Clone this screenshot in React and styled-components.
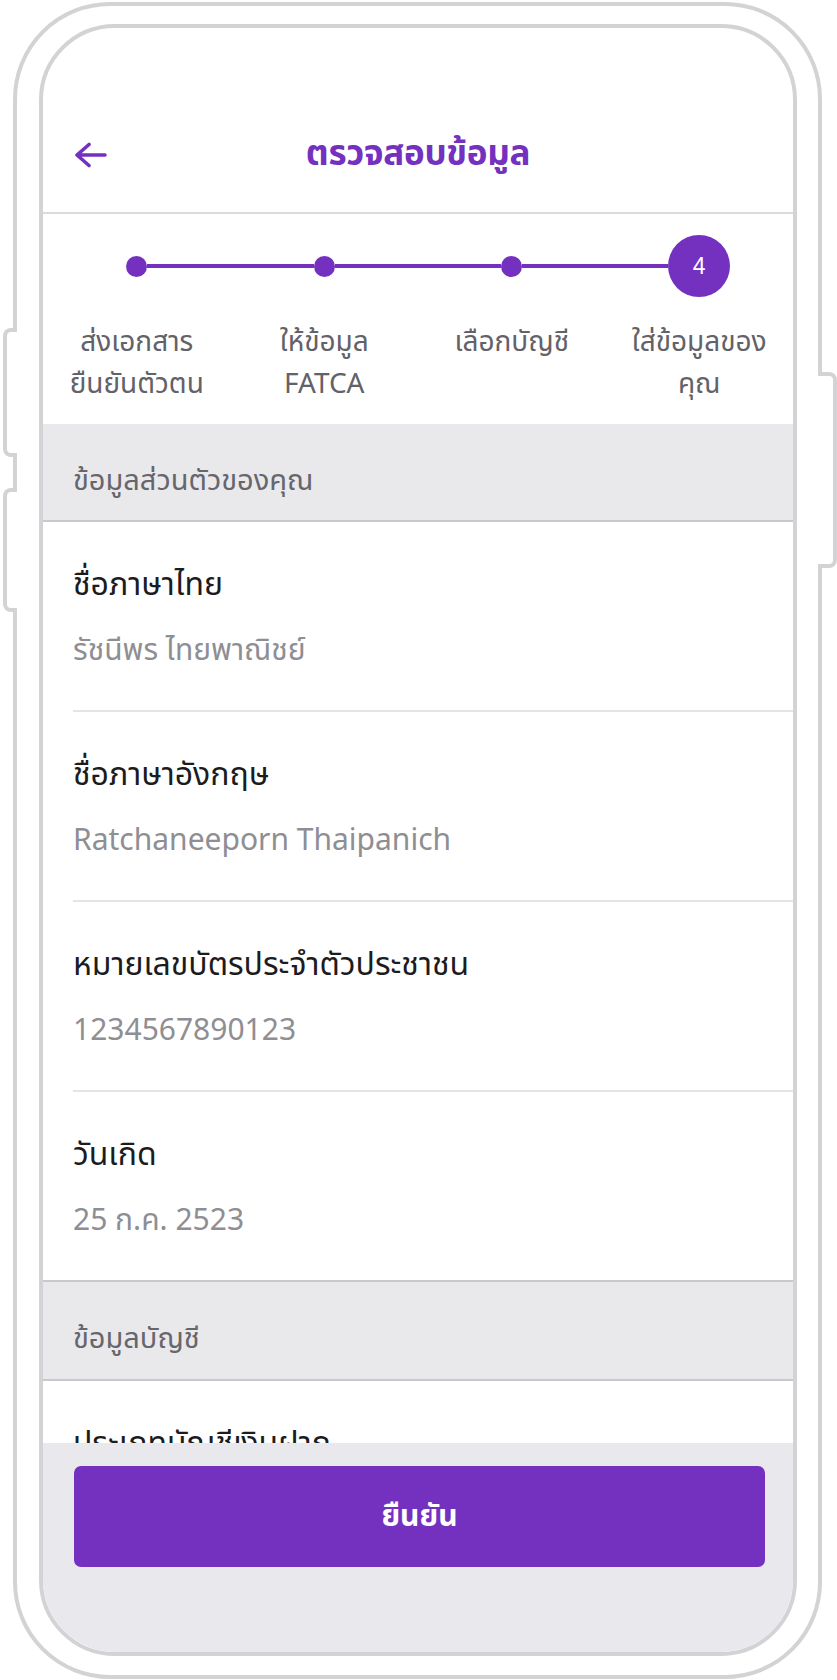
import React from "react";
import styled, { createGlobalStyle } from "styled-components";

const GlobalStyle = createGlobalStyle`
  html, body {
    margin: 0;
    padding: 0;
    background: #ffffff;
  }
  body {
    font-family: "Noto Sans Thai", "Noto Sans", "Liberation Sans", sans-serif;
    -webkit-font-smoothing: antialiased;
  }
  * {
    box-sizing: border-box;
  }
`;

const PURPLE = "#7431bf";
const FRAME = "#d3d3d6";

const Page = styled.div`
  width: 837px;
  height: 1680px;
  padding: 2px 15px 1px 13px;
  overflow: hidden;
`;

const Device = styled.div`
  position: relative;
  height: 100%;
  border: 4px solid ${FRAME};
  border-radius: 97px;
  padding: 18px 21px 19px 22px;
  display: flex;
  flex-direction: column;
  background: #fff;
`;

// hardware keys sit over the frame edge
const SideKey = styled.span`
  position: absolute;
  top: ${(p) => p.$top}px;
  height: ${(p) => p.$height}px;
  width: ${(p) => (p.$right ? 19 : 14)}px;
  ${(p) => (p.$right ? "right: -19px;" : "left: -14px;")}
  background: #fff;
  border: 4px solid ${FRAME};
  ${(p) => (p.$right ? "border-left: none;" : "border-right: none;")}
  border-radius: ${(p) => (p.$right ? "0 8px 8px 0" : "8px 0 0 8px")};
`;

const Screen = styled.div`
  flex: 1;
  display: flex;
  flex-direction: column;
  border: 4px solid ${FRAME};
  border-radius: 76px;
  overflow: hidden;
  background: #fff;
`;

const Header = styled.header`
  display: grid;
  grid-template-columns: 1fr auto 1fr;
  align-items: center;
  height: 186px;
  padding: 99px 31px 29px;
  border-bottom: 2px solid #dadadd;
  flex-shrink: 0;
`;

const BackButton = styled.button`
  justify-self: start;
  display: flex;
  align-items: center;
  padding: 0;
  border: none;
  background: none;
  color: ${PURPLE};
  cursor: pointer;
`;

const Title = styled.h1`
  margin: 0;
  font-size: 35px;
  line-height: 56px;
  font-weight: 700;
  color: ${PURPLE};
  letter-spacing: -0.3px;
`;

const Stepper = styled.div`
  display: grid;
  grid-template-columns: repeat(4, 1fr);
  padding: 21px 0 18px;
  flex-shrink: 0;
`;

const Step = styled.div`
  display: flex;
  flex-direction: column;
  align-items: stretch;
`;

const Track = styled.div`
  display: flex;
  align-items: center;
  height: 62px;
`;

const Rail = styled.span`
  flex: 1;
  height: 4px;
  background: ${(p) => (p.$hidden ? "transparent" : PURPLE)};
`;

const Marker = styled.span`
  display: flex;
  align-items: center;
  justify-content: center;
  width: ${(p) => (p.$current ? 62 : 21)}px;
  height: ${(p) => (p.$current ? 62 : 21)}px;
  border-radius: 50%;
  background: ${PURPLE};
  color: #fff;
  font-family: "Liberation Sans", sans-serif;
  font-size: 23px;
`;

const StepLabel = styled.span`
  margin-top: 25px;
  text-align: center;
  font-size: 28px;
  line-height: 42px;
  color: #626268;
`;

const Scroll = styled.main`
  flex: 1;
  overflow: hidden;
`;

const SectionHeader = styled.div`
  height: ${(p) => (p.$divided ? 101 : 98)}px;
  padding: 37px 30px 0;
  background: #e9e9ec;
  border-top: ${(p) => (p.$divided ? "2px solid #c9c9cd" : "none")};
  border-bottom: 2px solid #c9c9cd;
  font-size: 29px;
  line-height: 40px;
  color: #66666c;
`;

const List = styled.div`
  padding-left: 30px;
`;

const Row = styled.div`
  height: 190px;
  padding-top: 41px;
  border-bottom: 2px solid #e4e4e7;

  &:last-child {
    height: 188px;
    border-bottom: none;
  }
`;

const Label = styled.div`
  font-size: 32px;
  line-height: 44px;
  color: #1c1c1e;
`;

const Value = styled.div`
  margin-top: 22px;
  font-size: 30px;
  line-height: 44px;
  color: #8e8e93;
`;

const Footer = styled.footer`
  flex-shrink: 0;
  height: 209px;
  padding: 23px 28px 0 31px;
  background: #e9e8ed;
`;

const ConfirmButton = styled.button`
  width: 100%;
  height: 101px;
  border: none;
  border-radius: 7px;
  background: ${PURPLE};
  color: #fff;
  font-family: inherit;
  font-size: 30px;
  font-weight: 700;
  cursor: pointer;
`;

const steps = [
  ["ส่งเอกสาร", "ยืนยันตัวตน"],
  ["ให้ข้อมูล", "FATCA"],
  ["เลือกบัญชี"],
  ["ใส่ข้อมูลของ", "คุณ"],
];

const personal = [
  { label: "ชื่อภาษาไทย", value: "รัชนีพร ไทยพาณิชย์" },
  { label: "ชื่อภาษาอังกฤษ", value: "Ratchaneeporn Thaipanich" },
  { label: "หมายเลขบัตรประจำตัวประชาชน", value: "1234567890123" },
  { label: "วันเกิด", value: "25 ก.ค. 2523" },
];

const account = [
  { label: "ประเภทบัญชีเงินฝาก", value: "ออมทรัพย์" },
];

function BackArrow() {
  return (
    <svg width="34" height="26" viewBox="0 0 34 26" fill="none">
      <path
        d="M3 13H31M15 2.5L3 13L15 23.5"
        stroke="currentColor"
        strokeWidth="3.6"
        strokeLinecap="round"
        strokeLinejoin="round"
      />
    </svg>
  );
}

export default function App() {
  const current = steps.length - 1;
  return (
    <>
      <GlobalStyle />
      <Page>
        <Device>
          <SideKey $top={322} $height={129} />
          <SideKey $top={482} $height={124} />
          <SideKey $right $top={366} $height={196} />
          <Screen>
            <Header>
              <BackButton aria-label="back">
                <BackArrow />
              </BackButton>
              <Title>ตรวจสอบข้อมูล</Title>
            </Header>
            <Stepper>
              {steps.map((lines, i) => (
                <Step key={i}>
                  <Track>
                    <Rail $hidden={i === 0} />
                    <Marker $current={i === current}>
                      {i === current ? i + 1 : null}
                    </Marker>
                    <Rail $hidden={i === steps.length - 1} />
                  </Track>
                  <StepLabel>
                    {lines.map((l) => (
                      <div key={l}>{l}</div>
                    ))}
                  </StepLabel>
                </Step>
              ))}
            </Stepper>
            <Scroll>
              <SectionHeader>ข้อมูลส่วนตัวของคุณ</SectionHeader>
              <List>
                {personal.map((r) => (
                  <Row key={r.label}>
                    <Label>{r.label}</Label>
                    <Value>{r.value}</Value>
                  </Row>
                ))}
              </List>
              <SectionHeader $divided>ข้อมูลบัญชี</SectionHeader>
              <List>
                {account.map((r) => (
                  <Row key={r.label}>
                    <Label>{r.label}</Label>
                    <Value>{r.value}</Value>
                  </Row>
                ))}
              </List>
            </Scroll>
            <Footer>
              <ConfirmButton>ยืนยัน</ConfirmButton>
            </Footer>
          </Screen>
        </Device>
      </Page>
    </>
  );
}
